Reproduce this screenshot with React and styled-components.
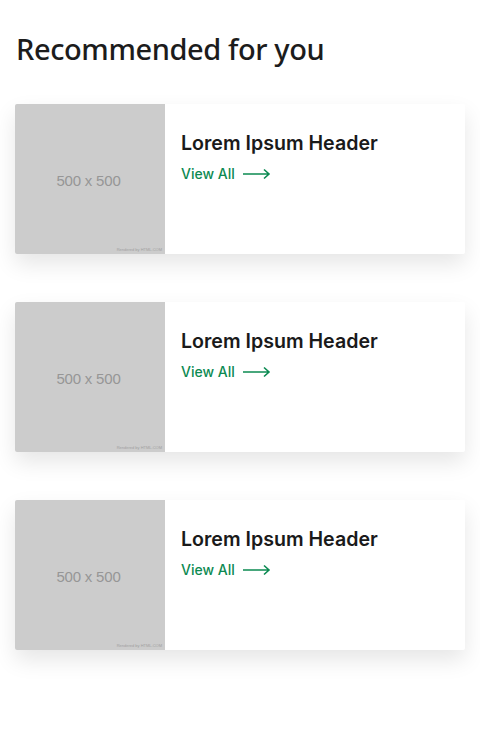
import React from 'react';
import styled, { createGlobalStyle } from 'styled-components';

const cards = [1, 2, 3].map((id) => ({ id, title: 'Lorem Ipsum Header' }));

const App = () => (
  <>
    <GlobalStyle />
    <Page>
      <Title>Recommended for you</Title>
      <List>
        {cards.map((card) => (
          <Card key={card.id}>
            <Placeholder>
              <Dims>500 x 500</Dims>
              <Credit>Rendered by HTML.COM</Credit>
            </Placeholder>
            <Body>
              <Header>{card.title}</Header>
              <ViewAll href="#">
                View All
                <svg width="28" height="12" viewBox="0 0 28 12" fill="none">
                  <path d="M0 6h26M21 1.5l5 4.5-5 4.5" stroke="currentColor" strokeWidth="1.6" />
                </svg>
              </ViewAll>
            </Body>
          </Card>
        ))}
      </List>
    </Page>
  </>
);

const GlobalStyle = createGlobalStyle`
  body {
    margin: 0;
    background: #fff;
    font-family: "Liberation Sans", Arial, sans-serif;
  }
`;

const Page = styled.div`
  padding: 30px 15px 60px;
`;

const Title = styled.h1`
  margin: 0 0 36px 1px;
  font-family: "Noto Sans", sans-serif;
  font-weight: 500;
  font-size: 29px;
  line-height: 38px;
  letter-spacing: -0.4px;
  color: #1c1c1c;
`;

const List = styled.div`
  display: flex;
  flex-direction: column;
  gap: 48px;
`;

const Card = styled.div`
  display: flex;
  width: 450px;
  height: 150px;
  background: #fff;
  border-radius: 2px;
  overflow: hidden;
  box-shadow: 0 10px 22px rgba(0, 0, 0, 0.1);
`;

const Placeholder = styled.div`
  position: relative;
  flex: 0 0 150px;
  display: flex;
  align-items: center;
  justify-content: center;
  padding-top: 3px;
  padding-right: 3px;
  box-sizing: border-box;
  background: #cccccc;
`;

const Dims = styled.span`
  font-family: "Liberation Sans", Arial, sans-serif;
  font-size: 15px;
  letter-spacing: -0.2px;
  color: #969696;
`;

const Credit = styled.span`
  position: absolute;
  right: 3px;
  bottom: 2px;
  font-size: 4px;
  color: #a0a0a0;
`;

const Body = styled.div`
  padding: 27px 16px;
`;

const Header = styled.h2`
  margin: 0 0 10px;
  font-family: "Inter", sans-serif;
  font-weight: 600;
  font-size: 19.6px;
  line-height: 24px;
  color: #1a1a1a;
`;

const ViewAll = styled.a`
  display: inline-flex;
  align-items: center;
  gap: 8px;
  font-family: "Inter", sans-serif;
  font-weight: 500;
  font-size: 14px;
  color: #0c8a52;
  text-decoration: none;
`;

export default App;
